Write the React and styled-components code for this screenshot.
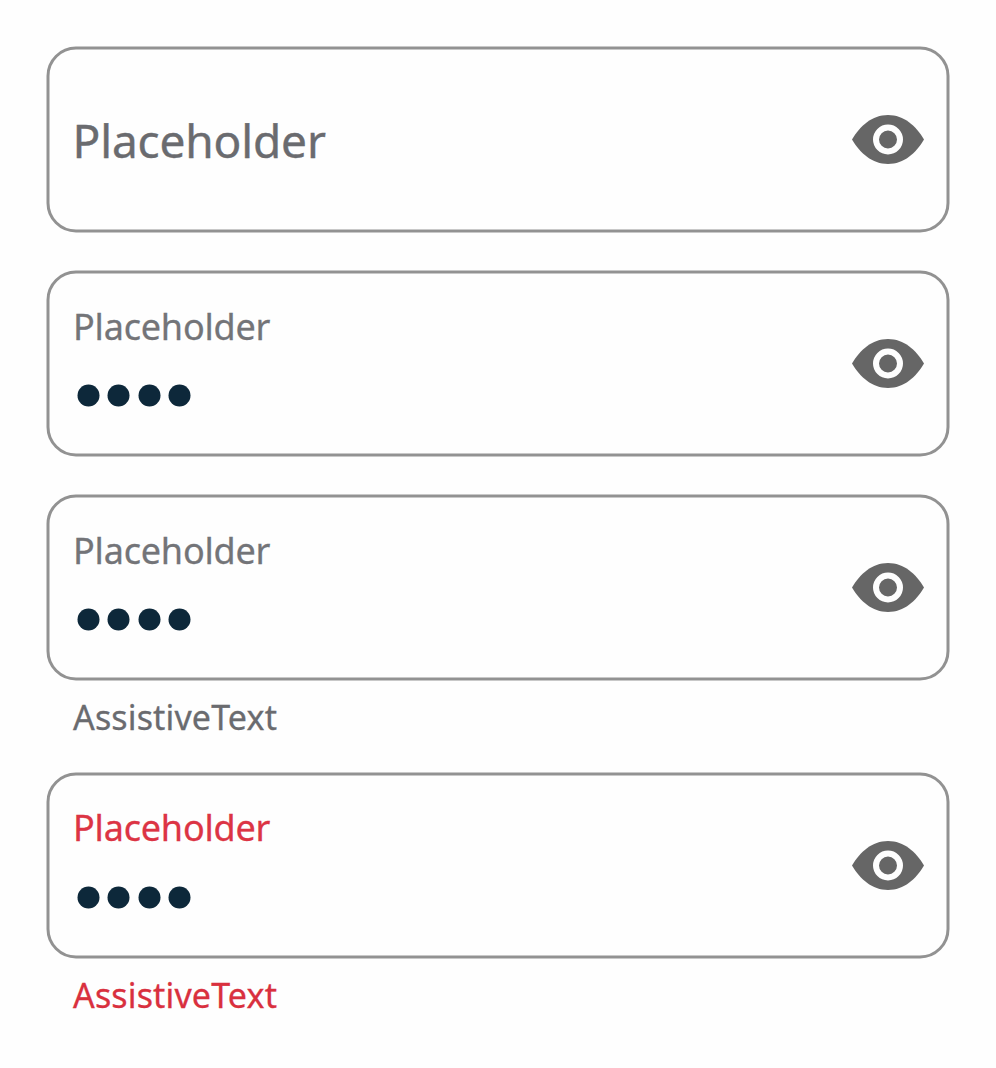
import React from "react";
import styled, { createGlobalStyle } from "styled-components";

const GlobalStyle = createGlobalStyle`
  * { box-sizing: border-box; }
  body { margin: 0; background: #fefefe; font-family: "Noto Sans", sans-serif; }
`;

const Page = styled.main`
  display: flex;
  flex-direction: column;
  gap: 38px;
  width: 996px;
  height: 1068px;
  padding: 46px 46px 0;
`;

const Field = styled.section`
  display: flex;
  flex-direction: column;
`;

const InputBox = styled.div`
  display: flex;
  align-items: center;
  justify-content: space-between;
  width: 903px;
  height: 186px;
  padding: 0 22.5px 0 23.5px;
  border: 3px solid #929292;
  border-radius: 29.5px;
  transform: translate(0.5px, 0.5px);
`;

const Content = styled.div`
  display: flex;
  flex-direction: column;
  padding-bottom: ${(p) => (p.$filled ? "18.5px" : "0")};
`;

const Placeholder = styled.span`
  height: 60px;
  line-height: 60px;
  font-size: 46px;
  letter-spacing: -0.15px;
  text-indent: -0.5px;
  -webkit-text-stroke: 0.4px;
  color: #6a6b6f;
`;

const Label = styled.span`
  height: 48px;
  margin: ${(p) => (p.$error ? "-1px 0 35.5px" : "0 0 34.5px")};
  line-height: 48px;
  font-size: 36px;
  letter-spacing: -0.2px;
  -webkit-text-stroke: 0.3px;
  color: ${(p) => (p.$error ? "#dc3444" : "#737478")};
`;

const Dots = styled.div`
  display: flex;
  gap: 8.67px;
  padding-left: 4px;
`;

const Dot = styled.i`
  width: 22px;
  height: 22px;
  border-radius: 50%;
  background: #0d283a;
`;

const Toggle = styled.button`
  display: flex;
  width: 72px;
  height: 49px;
  padding: 0;
  border: 0;
  background: none;
  transform: translate(-0.5px, -0.5px);
`;

const AssistiveText = styled.span`
  height: 54px;
  padding: 12px 0 0 27px;
  line-height: 50px;
  font-size: 34px;
  letter-spacing: 0.15px;
  -webkit-text-stroke: 0.3px;
  color: ${(p) => (p.$error ? "#d9303e" : "#6a6b6f")};
`;

function EyeIcon() {
  return (
    <svg width="72" height="49" viewBox="0 0 72 49">
      <path
        fill="#666"
        d="M0 24.5C8 11 20 0 36 0s28 11 36 24.5C64 38 52 49 36 49S8 38 0 24.5Z"
      />
      <circle cx="36" cy="24.5" r="12" fill="#666" stroke="#fefefe" strokeWidth="6" />
    </svg>
  );
}

function PasswordField({ filled, assistive, error }) {
  return (
    <Field>
      <InputBox>
        <Content $filled={filled}>
          {filled ? (
            <>
              <Label $error={error}>Placeholder</Label>
              <Dots>
                {[0, 1, 2, 3].map((n) => (
                  <Dot key={n} />
                ))}
              </Dots>
            </>
          ) : (
            <Placeholder>Placeholder</Placeholder>
          )}
        </Content>
        <Toggle aria-label="Show password">
          <EyeIcon />
        </Toggle>
      </InputBox>
      {assistive && <AssistiveText $error={error}>AssistiveText</AssistiveText>}
    </Field>
  );
}

export default function App() {
  return (
    <>
      <GlobalStyle />
      <Page>
        <PasswordField />
        <PasswordField filled />
        <PasswordField filled assistive />
        <PasswordField filled assistive error />
      </Page>
    </>
  );
}
